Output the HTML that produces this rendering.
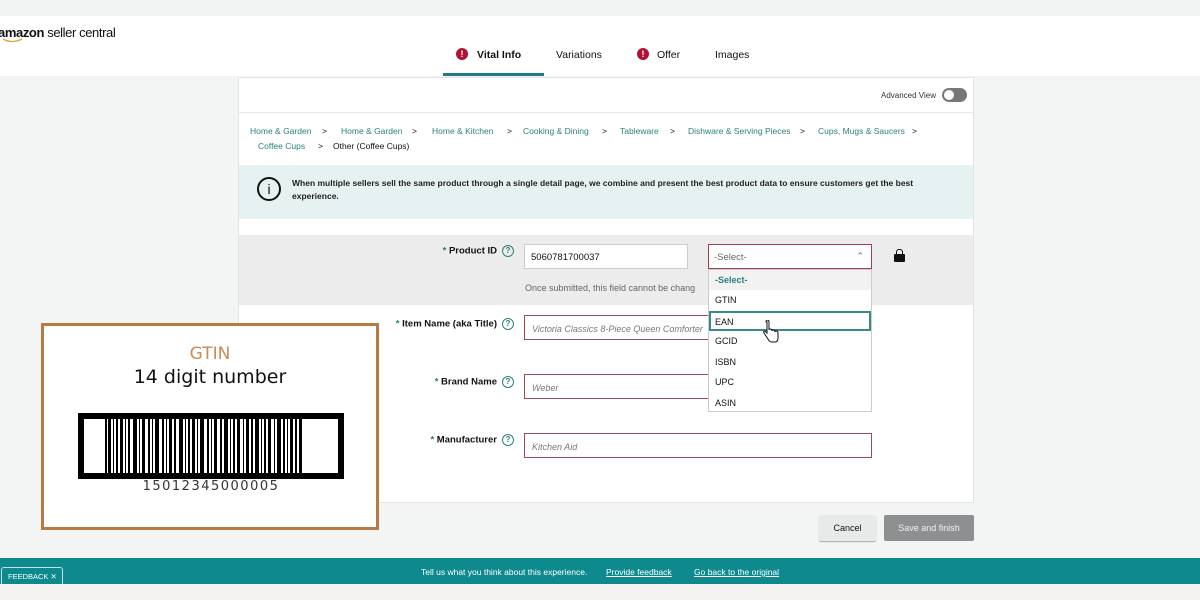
<!DOCTYPE html>
<html><head><meta charset="utf-8"><style>
*{box-sizing:border-box;margin:0;padding:0}
body{width:1200px;height:600px;overflow:hidden;background:#f3f4f4;font-family:"Liberation Sans",sans-serif;position:relative;color:#111}
.a{position:absolute}
.lnk{color:#2a7f7f}
.bc{font-size:8.5px;top:126px}
.lbl{font-size:9.5px;font-weight:bold;text-align:right;width:200px;left:314px;white-space:nowrap}
.q{display:inline-block;width:12px;height:12px;border:1.3px solid #2a7f7f;border-radius:50%;font-size:8px;text-align:center;line-height:10px;color:#2a7f7f;font-weight:bold;margin-left:5px;vertical-align:middle}
.inp{border:1px solid #9b4a58;height:25px;background:#fff;font-size:9px;font-style:italic;color:#777;padding:8px 7px}
.opt{position:absolute;left:0;width:162px;height:20px;font-size:9px;padding:5px 6px}
</style></head><body>
<div class="a" style="left:0;top:0;width:1200px;height:16px;background:#f2f3f3"></div>
<div class="a" style="left:0;top:16px;width:1200px;height:60px;background:#fff"></div>
<div class="a" style="left:-2px;top:25px;font-size:13px;letter-spacing:-0.4px"><b>amazon</b> seller central</div>
<svg class="a" style="left:2px;top:38px" width="22" height="6"><path d="M1 1 Q10 6 20 1" stroke="#e8a23a" stroke-width="1.3" fill="none"/></svg>
<div class="a" style="left:456px;top:48px;width:12px;height:12px;border-radius:50%;background:#b01234;color:#fff;font-size:9px;font-weight:bold;text-align:center;line-height:12px">!</div>
<div class="a" style="left:477px;top:49px;font-size:10.5px;font-weight:bold">Vital Info</div>
<div class="a" style="left:443px;top:73px;width:101px;height:3px;background:#1f7d82"></div>
<div class="a" style="left:556px;top:49px;font-size:10.5px">Variations</div>
<div class="a" style="left:637px;top:48px;width:12px;height:12px;border-radius:50%;background:#b01234;color:#fff;font-size:9px;font-weight:bold;text-align:center;line-height:12px">!</div>
<div class="a" style="left:657px;top:49px;font-size:10.5px">Offer</div>
<div class="a" style="left:715px;top:49px;font-size:10.5px">Images</div>

<div class="a" style="left:238px;top:77px;width:736px;height:426px;background:#fff;border:1px solid #e3e3e3"></div>
<div class="a" style="left:238px;top:112px;width:736px;height:1px;background:#e8e8e8"></div>
<div class="a" style="left:881px;top:91px;font-size:8px;color:#333">Advanced View</div>
<div class="a" style="left:942px;top:88px;width:25px;height:14px;border-radius:7px;background:#777"><div class="a" style="left:2px;top:2px;width:10px;height:10px;border-radius:50%;background:#fff"></div></div>

<div class="a bc" style="left:250px"><span class="lnk">Home &amp; Garden</span></div>
<div class="a bc" style="left:322px">&gt;</div>
<div class="a bc" style="left:341px"><span class="lnk">Home &amp; Garden</span></div>
<div class="a bc" style="left:412px">&gt;</div>
<div class="a bc" style="left:432px"><span class="lnk">Home &amp; Kitchen</span></div>
<div class="a bc" style="left:507px">&gt;</div>
<div class="a bc" style="left:523px"><span class="lnk">Cooking &amp; Dining</span></div>
<div class="a bc" style="left:602px">&gt;</div>
<div class="a bc" style="left:620px"><span class="lnk">Tableware</span></div>
<div class="a bc" style="left:670px">&gt;</div>
<div class="a bc" style="left:688px"><span class="lnk">Dishware &amp; Serving Pieces</span></div>
<div class="a bc" style="left:800px">&gt;</div>
<div class="a bc" style="left:818px"><span class="lnk">Cups, Mugs &amp; Saucers</span></div>
<div class="a bc" style="left:912px">&gt;</div>
<div class="a bc" style="left:258px;top:141px"><span class="lnk">Coffee Cups</span></div>
<div class="a bc" style="left:318px;top:141px">&gt;</div>
<div class="a bc" style="left:333px;top:141px">Other (Coffee Cups)</div>

<div class="a" style="left:239px;top:165px;width:734px;height:54px;background:#e6f1f2"></div>
<div class="a" style="left:257px;top:177px;width:24px;height:24px;border:2px solid #111;border-radius:50%;text-align:center;font-size:14px;line-height:20px">i</div>
<div class="a" style="left:292px;top:177px;width:670px;font-size:8.5px;font-weight:bold;line-height:13px;color:#222">When multiple sellers sell the same product through a single detail page, we combine and present the best product data to ensure customers get the best experience.</div>

<div class="a" style="left:239px;top:235px;width:734px;height:70px;background:#ececec"></div>
<div class="a lbl" style="top:245px"><span style="color:#2a7f7f">*</span> Product ID<span class="q">?</span></div>
<div class="a" style="left:524px;top:244px;width:164px;height:25px;background:#fff;border:1px solid #ccc;font-size:9.5px;padding:7px 6px">5060781700037</div>
<div class="a" style="left:708px;top:244px;width:164px;height:25px;background:#fff;border:1.5px solid #a83b52;font-size:9.5px;color:#666;padding:7px 5px">-Select-<span style="position:absolute;right:7px;top:6px;font-size:9px">&#8963;</span></div>
<div class="a" style="left:894px;top:254px;width:11px;height:8px;background:#111;border-radius:1px"></div>
<div class="a" style="left:896px;top:249px;width:7px;height:7px;border:1.5px solid #111;border-bottom:none;border-radius:3px 3px 0 0"></div>
<div class="a" style="left:525px;top:283px;font-size:9px;color:#666">Once submitted, this field cannot be chang</div>

<div class="a lbl" style="top:318px"><span style="color:#2a7f7f">*</span> Item Name (aka Title)<span class="q">?</span></div>
<div class="a inp" style="left:524px;top:315px;width:348px">Victoria Classics 8-Piece Queen Comforter</div>
<div class="a lbl" style="top:376px"><span style="color:#2a7f7f">*</span> Brand Name<span class="q">?</span></div>
<div class="a inp" style="left:524px;top:374px;width:348px">Weber</div>
<div class="a lbl" style="top:434px"><span style="color:#2a7f7f">*</span> Manufacturer<span class="q">?</span></div>
<div class="a inp" style="left:524px;top:433px;width:348px">Kitchen Aid</div>

<div class="a" style="left:708px;top:269px;width:164px;height:143px;background:#fff;border:1px solid #ccc">
<div class="opt" style="top:0;background:#f2f2f2;color:#2a7f7f;font-weight:bold">-Select-</div>
<div class="opt" style="top:20px">GTIN</div>
<div class="opt" style="top:41px;border:2px solid #3b8a8a;padding:4px 4px">EAN</div>
<div class="opt" style="top:61px">GCID</div>
<div class="opt" style="top:82px">ISBN</div>
<div class="opt" style="top:102px">UPC</div>
<div class="opt" style="top:123px">ASIN</div>
</div>
<svg class="a" style="left:762px;top:320px" width="18" height="24"><path d="M5 2 v11 l-2-2 q-2 0 -1 2 l4 6 q1 3 4 3 h3 q3 0 3-4 v-5 q0-2-2-2 q-1 0-1 1 q0-2-2-2 q-1 0-1 1 q0-2-2-2 q-1 0-1 1 v-8 q0-2-1.5-2 t-1.5 2z" fill="#fff" stroke="#111" stroke-width="1"/></svg>

<div class="a" style="left:819px;top:515px;width:57px;height:26px;background:#e8eaea;border-radius:2px;box-shadow:0 1px 1px #aaa;font-size:9px;text-align:center;line-height:26px">Cancel</div>
<div class="a" style="left:884px;top:515px;width:90px;height:26px;background:#8d9090;border-radius:2px;font-size:9px;color:#f0f0f0;text-align:center;line-height:26px">Save and finish</div>

<div class="a" style="left:0;top:558px;width:1200px;height:26px;background:#0e8a8f"></div>
<div class="a" style="left:0;top:584px;width:1200px;height:16px;background:#f5f3f2"></div>
<div class="a" style="left:1px;top:567px;width:62px;height:17px;background:#0e8a8f;border:1px solid #bfe3e3;border-bottom:none;border-radius:3px 3px 0 0;color:#fff;font-size:7.5px;padding:4px 0 0 6px;white-space:nowrap">FEEDBACK ✕</div>
<div class="a" style="left:421px;top:567px;font-size:8.5px;color:#fff">Tell us what you think about this experience.</div>
<div class="a" style="left:606px;top:567px;font-size:8.5px;color:#fff;text-decoration:underline">Provide feedback</div>
<div class="a" style="left:694px;top:567px;font-size:8.5px;color:#fff;text-decoration:underline">Go back to the original</div>

<div class="a" style="left:41px;top:323px;width:338px;height:207px;background:#fff;border:3px solid #b77a44"></div>
<div class="a" style="left:41px;top:344px;width:338px;text-align:center;font-size:17px;color:#c98a55;font-family:'DejaVu Sans',sans-serif">GTIN</div>
<div class="a" style="left:41px;top:366px;width:338px;text-align:center;font-size:19px;color:#111;font-family:'DejaVu Sans',sans-serif">14 digit number</div>
<svg class="a" style="left:78px;top:413px" width="266" height="66">
<rect x="0" y="0" width="266" height="66" fill="#000"/>
<rect x="6" y="6" width="254" height="54" fill="#fff"/>
<g fill="#000">
<rect x="27" y="6" width="2" height="54"/><rect x="30" y="6" width="3" height="54"/><rect x="35" y="6" width="1" height="54"/><rect x="38" y="6" width="2" height="54"/><rect x="42" y="6" width="3" height="54"/><rect x="47" y="6" width="1" height="54"/><rect x="50" y="6" width="2" height="54"/><rect x="55" y="6" width="4" height="54"/><rect x="61" y="6" width="1" height="54"/><rect x="64" y="6" width="3" height="54"/><rect x="70" y="6" width="2" height="54"/><rect x="74" y="6" width="1" height="54"/><rect x="77" y="6" width="4" height="54"/><rect x="84" y="6" width="2" height="54"/><rect x="88" y="6" width="1" height="54"/><rect x="91" y="6" width="3" height="54"/><rect x="96" y="6" width="2" height="54"/><rect x="101" y="6" width="4" height="54"/><rect x="107" y="6" width="1" height="54"/><rect x="110" y="6" width="2" height="54"/><rect x="114" y="6" width="3" height="54"/><rect x="119" y="6" width="1" height="54"/><rect x="122" y="6" width="4" height="54"/><rect x="129" y="6" width="2" height="54"/><rect x="133" y="6" width="1" height="54"/><rect x="136" y="6" width="3" height="54"/><rect x="142" y="6" width="2" height="54"/><rect x="146" y="6" width="4" height="54"/><rect x="152" y="6" width="1" height="54"/><rect x="155" y="6" width="2" height="54"/><rect x="159" y="6" width="3" height="54"/><rect x="165" y="6" width="1" height="54"/><rect x="168" y="6" width="3" height="54"/><rect x="173" y="6" width="2" height="54"/><rect x="177" y="6" width="4" height="54"/><rect x="183" y="6" width="1" height="54"/><rect x="186" y="6" width="2" height="54"/><rect x="190" y="6" width="3" height="54"/><rect x="196" y="6" width="1" height="54"/><rect x="199" y="6" width="4" height="54"/><rect x="205" y="6" width="2" height="54"/><rect x="209" y="6" width="1" height="54"/><rect x="212" y="6" width="3" height="54"/><rect x="217" y="6" width="2" height="54"/><rect x="221" y="6" width="3" height="54"/>
</g></svg>
<div class="a" style="left:78px;top:479px;width:266px;text-align:center;font-size:13px;letter-spacing:1.5px;color:#333;font-family:'DejaVu Sans',sans-serif">15012345000005</div>
</body></html>
